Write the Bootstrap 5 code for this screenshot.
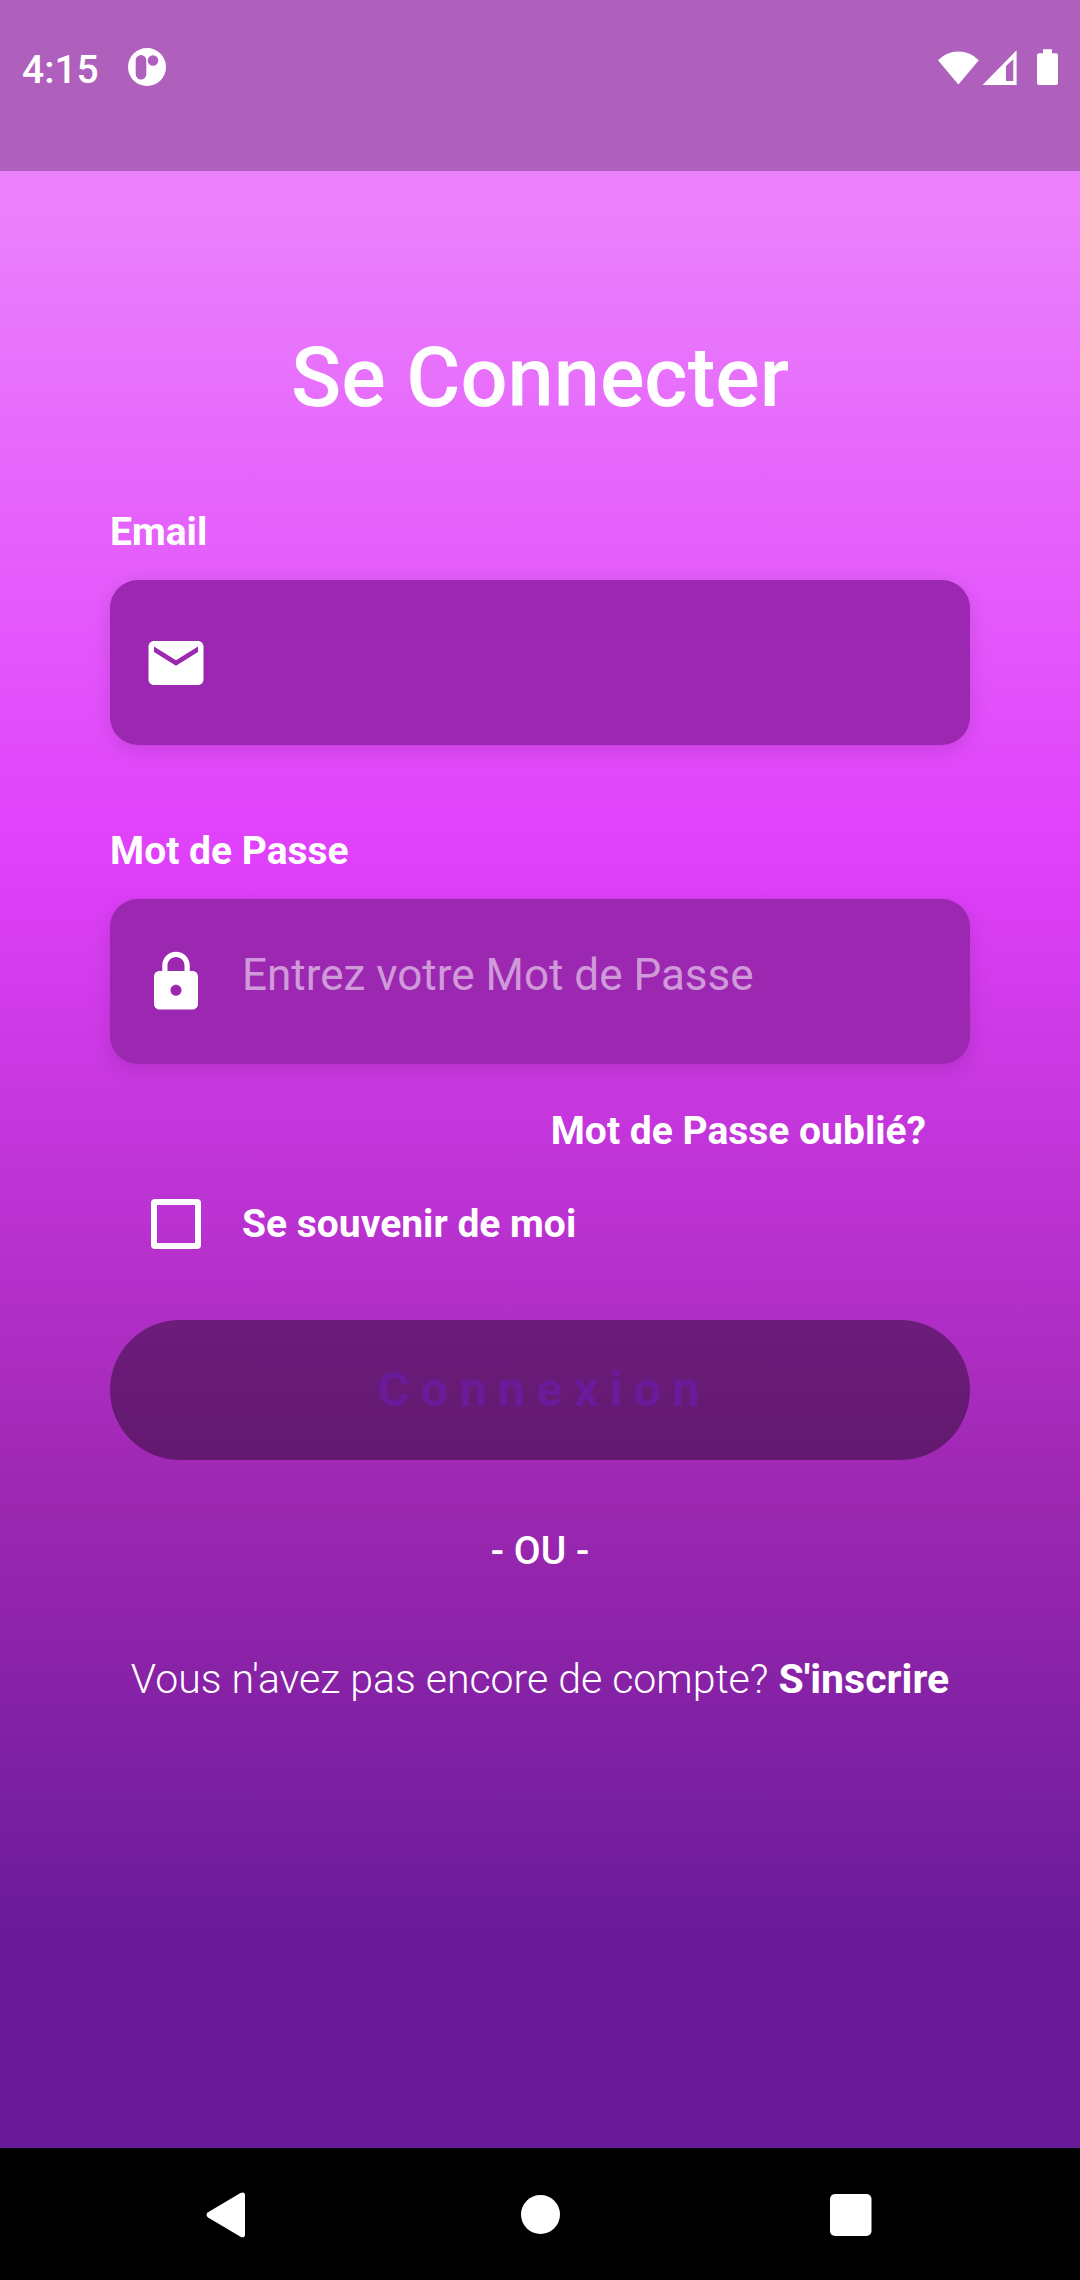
<!DOCTYPE html>
<html lang="fr">
<head>
<meta charset="utf-8">
<meta name="viewport" content="width=device-width, initial-scale=1">
<title>Se Connecter</title>
<link rel="stylesheet" href="https://cdn.jsdelivr.net/npm/bootstrap@5.3.0/dist/css/bootstrap.min.css">
<style>
  body { font-family: Roboto, "Noto Sans", sans-serif; background: #000; color: #fff; }
  .screen { background: linear-gradient(#ea80fc 10%, #e040fb 40%, #9c27b0 70%, #6a1b9a 90%); }
  .status-bar { height: 171px; padding: 40px 22px 0; background: rgba(0, 0, 0, .25); }
  .status-left { gap: 29px; }
  .status-bar svg, .nav-keys svg, .field-box svg { display: block; flex: none; fill: #fff; }
  .clock { font-size: 39px; line-height: 60px; font-weight: 500; }
  .login { padding: 158px 110px 0; }
  .login-title { font-size: 83px; line-height: 98px; font-weight: 500; margin-bottom: 82px; }
  .field-label, .forgot, .remember, .divider { font-size: 39px; line-height: 46px; }
  .field-label, .forgot, .remember { font-weight: 700; }
  .field-label { margin-bottom: 25px; }
  .field-box { height: 165px; padding: 0 33px; gap: 33px; background: #9c27b0; border-radius: 28px; box-shadow: 0 6px 20px rgba(0, 0, 0, .12); }
  .field-box + .field-label { margin-top: 83px; }
  .field-box .form-control { height: 100%; padding: 0 0 14px; font-size: 44px; color: #fff; box-shadow: none; }
  .field-box .form-control::placeholder { color: rgba(255, 255, 255, .54); opacity: 1; }
  .forgot { margin: 44px 44px 0 0; }
  .remember-row { margin: 45px 0 71px 41px; gap: 41px; min-height: 50px; }
  .remember-row .form-check-input { width: 50px; height: 50px; margin: 0; border: 6px solid #fff; border-radius: 4px; background-color: transparent; }
  .submit { height: 140px; border: 0; border-radius: 70px; padding: 0 0 0 8px; background: rgba(0, 0, 0, .38); color: #6a1b9a; font-size: 49px; font-weight: 700; letter-spacing: 11px; }
  .divider { font-weight: 500; margin: 68px 0 80px; }
  .signup { font-size: 41px; line-height: 50px; font-weight: 300; }
  .nav-keys { height: 132px; padding: 0 196px; background: #000; }
</style>
</head>
<body class="d-flex flex-column min-vh-100">
<div class="screen flex-grow-1">
  <header class="status-bar d-flex justify-content-between align-items-start">
    <div class="status-left d-flex align-items-start">
      <span class="clock">4:15</span>
      <svg class="mt-2" width="38" height="38" viewBox="0 0 38 38" aria-hidden="true"><path fill-rule="evenodd" d="M19 0a19 19 0 1 1 0 38a19 19 0 0 1 0-38zM13 7a5.300 5.300 0 0 0-5.300 5.300v13.900a5.300 5.300 0 0 0 10.600 0V12.300A5.300 5.300 0 0 0 13 7zM25 7.200a5.300 5.300 0 1 0 0 10.600a5.300 5.300 0 0 0 0-10.600z"/></svg>
    </div>
    <svg width="121" height="38" viewBox="0 0 121 38" class="mt-2" aria-hidden="true">
      <path d="M1 12.200A28.500 28.500 0 0 1 41.800 12.200L21.400 36.500z"/>
      <path fill-rule="evenodd" d="M79.600 2.200V36.900H45.500zM76.300 11.200L69 18V33H76.300z"/>
      <path d="M106 1.200h9v4h4q2 0 2 2v27.700q0 2-2 2h-17q-2 0-2-2V7.200q0-2 2-2h4z"/>
    </svg>
  </header>

  <main class="login">
    <h1 class="login-title text-center">Se Connecter</h1>
    <form>
      <label class="field-label d-block" for="email">Email</label>
      <div class="field-box d-flex align-items-center">
        <svg width="66" height="66" viewBox="0 0 24 24" aria-hidden="true"><path d="M20 4H4c-1.100 0-1.990.9-1.990 2L2 18c0 1.100.9 2 2 2h16c1.100 0 2-.9 2-2V6c0-1.100-.9-2-2-2zm0 4l-8 5-8-5V6l8 5 8-5v2z"/></svg>
        <input class="form-control border-0 bg-transparent rounded-0" type="email" id="email">
      </div>
      <label class="field-label d-block" for="password">Mot de Passe</label>
      <div class="field-box d-flex align-items-center">
        <svg width="66" height="66" viewBox="0 0 24 24" aria-hidden="true"><path d="M18 8h-1V6c0-2.760-2.240-5-5-5S7 3.240 7 6v2H6c-1.100 0-2 .9-2 2v10c0 1.100.9 2 2 2h12c1.100 0 2-.9 2-2V10c0-1.100-.9-2-2-2zm-6 9c-1.100 0-2-.9-2-2s.9-2 2-2 2 .9 2 2-.9 2-2 2zm3.100-9H8.900V6c0-1.710 1.390-3.100 3.100-3.100 1.710 0 3.100 1.390 3.100 3.100v2z"/></svg>
        <input class="form-control border-0 bg-transparent rounded-0" type="password" id="password" placeholder="Entrez votre Mot de Passe">
      </div>
      <div class="forgot text-end"><a class="text-white text-decoration-none" href="#">Mot de Passe oublié?</a></div>
      <div class="remember-row d-flex align-items-center">
        <input class="form-check-input" type="checkbox" id="remember">
        <label class="remember" for="remember">Se souvenir de moi</label>
      </div>
      <button class="submit d-block w-100" type="submit" disabled>Connexion</button>
    </form>
    <p class="divider text-center">- OU -</p>
    <p class="signup text-center mb-0">Vous n'avez pas encore de compte? <a class="text-white text-decoration-none fw-bold" href="#">S'inscrire</a></p>
  </main>
</div>

<nav class="nav-keys d-flex justify-content-between align-items-center" aria-label="Navigation">
  <button class="btn p-0 border-0" type="button" aria-label="Retour"><svg width="66" height="66" viewBox="0 0 66 66"><path d="M12 31.200L44.500 12.100q4.500-2 4.500 2.500V53.200q0 4.500-4.500 2.500L12 36.500q-3-2.600 0-5.300z"/></svg></button>
  <button class="btn p-0 border-0" type="button" aria-label="Accueil"><svg width="66" height="66" viewBox="0 0 66 66"><circle cx="33.500" cy="33.500" r="19.500"/></svg></button>
  <button class="btn p-0 border-0" type="button" aria-label="Applications"><svg width="66" height="66" viewBox="0 0 66 66"><rect x="12" y="13" width="41.500" height="42" rx="5"/></svg></button>
</nav>
<script src="https://cdn.jsdelivr.net/npm/bootstrap@5.3.0/dist/js/bootstrap.bundle.min.js"></script>
</body>
</html>
